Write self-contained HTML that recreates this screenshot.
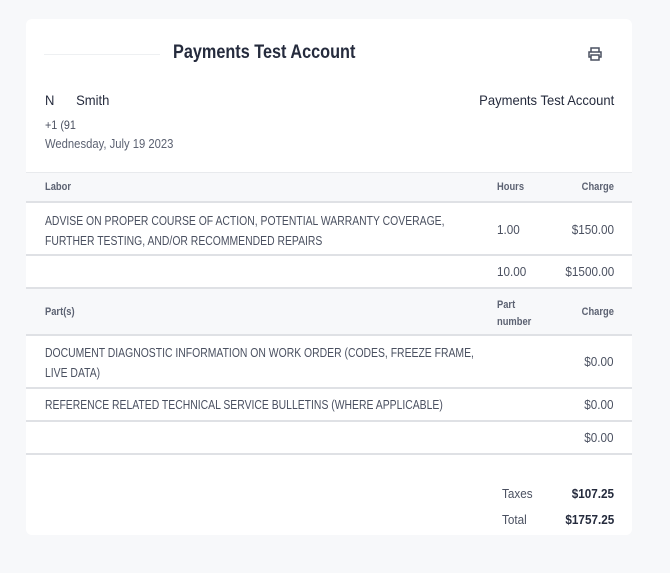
<!DOCTYPE html>
<html><head><style>
body{margin:0;background:#f7f8fa;font-family:"Liberation Sans",sans-serif;color:#4a5060;width:670px;height:573px;overflow:hidden}
.card{position:absolute;left:26px;top:19px;width:606px;height:516px;background:#fff;border-radius:6px}
.a{position:absolute;white-space:nowrap;transform-origin:left top}
.r{text-align:right;right:18px;transform-origin:right top}
.line{position:absolute;left:0;width:606px;height:2px;background:#dfe1e5}
.hd{position:absolute;left:0;width:606px;background:#f7f8fa}
.h{font-size:11px;font-weight:bold;color:#5c6272;transform:scaleX(.85)}
.t{font-size:13px;color:#4a5060;transform:scaleX(.9)}
.c{transform:scaleX(.8)}
</style></head><body>
<div class="card">
<div class="a" style="left:18px;top:35px;width:116px;height:1px;background:#eef0f2"></div>
<div class="a" style="left:147px;top:23px;font-size:19px;font-weight:bold;color:#252b3d;transform:scaleX(.855)">Payments Test Account</div>
<svg class="a" style="left:561px;top:27px" width="16" height="16" viewBox="0 0 16 16" fill="none" stroke="#4a5060" stroke-width="1.5"><path d="M4 6V2h8v4M4 11H2V6h12v5h-2M4 9h8v5H4z"/></svg>
<div class="a" style="left:19px;top:73px;font-size:14px;color:#252b3d;transform:scaleX(.93)">N&nbsp;&nbsp;&nbsp;&nbsp;&nbsp;&nbsp;Smith</div>
<div class="a r" style="top:73px;font-size:14px;color:#252b3d;transform:scaleX(.93)">Payments Test Account</div>
<div class="a" style="left:19px;top:99px;font-size:12px;color:#4a5060;transform:scaleX(.9)">+1 (91</div>
<div class="a" style="left:19px;top:118px;font-size:12.5px;color:#5c6272;transform:scaleX(.9)">Wednesday, July 19 2023</div>
<div class="hd" style="top:153px;height:30px"></div>
<div class="line" style="top:153px;height:1px;background:#e8eaed"></div>
<div class="a h" style="left:19px;top:162px">Labor</div>
<div class="a h" style="left:471px;top:162px">Hours</div>
<div class="a h r" style="top:162px">Charge</div>
<div class="line" style="top:182px"></div>
<div class="a t c" style="left:19px;top:192px;line-height:20px">ADVISE ON PROPER COURSE OF ACTION, POTENTIAL WARRANTY COVERAGE,<br>FURTHER TESTING, AND/OR RECOMMENDED REPAIRS</div>
<div class="a t" style="left:471px;top:203px">1.00</div>
<div class="a t r" style="top:203px">$150.00</div>
<div class="line" style="top:235px"></div>
<div class="a t" style="left:471px;top:245px">10.00</div>
<div class="a t r" style="top:245px">$1500.00</div>
<div class="hd" style="top:268px;height:47px"></div>
<div class="line" style="top:268px"></div>
<div class="a h" style="left:19px;top:287px">Part(s)</div>
<div class="a h" style="left:471px;top:278px;line-height:17px">Part<br>number</div>
<div class="a h r" style="top:287px">Charge</div>
<div class="line" style="top:315px"></div>
<div class="a t c" style="left:19px;top:324px;line-height:20px">DOCUMENT DIAGNOSTIC INFORMATION ON WORK ORDER (CODES, FREEZE FRAME,<br>LIVE DATA)</div>
<div class="a t r" style="top:335px">$0.00</div>
<div class="line" style="top:368px"></div>
<div class="a t c" style="left:19px;top:378px">REFERENCE RELATED TECHNICAL SERVICE BULLETINS (WHERE APPLICABLE)</div>
<div class="a t r" style="top:378px">$0.00</div>
<div class="line" style="top:401px"></div>
<div class="a t r" style="top:411px">$0.00</div>
<div class="line" style="top:434px"></div>
<div class="a t" style="left:476px;top:467px">Taxes</div>
<div class="a t r" style="top:467px;font-weight:bold;color:#252b3d">$107.25</div>
<div class="a t" style="left:476px;top:493px">Total</div>
<div class="a t r" style="top:493px;font-weight:bold;color:#252b3d">$1757.25</div>
</div>
</body></html>
